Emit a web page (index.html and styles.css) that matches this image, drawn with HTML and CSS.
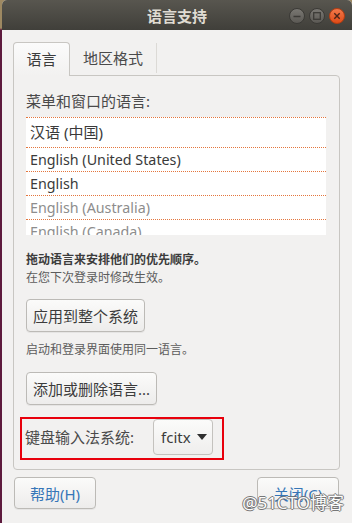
FILE: index.html
```html
<!DOCTYPE html>
<html lang="zh-CN">

<head>
    <meta charset="UTF-8" />
    <meta name="viewport" content="width=device-width, initial-scale=1.0" />
    <title>语言支持</title>
    <link rel="stylesheet" href="styles.css">
</head>

<body>
    <div class="window">
        <div class="titlebar">
            <div class="title">语言支持</div>
            <div class="controls">
                <svg class="ctl" width="16" height="16" viewBox="0 0 16 16">
                    <defs>
                        <linearGradient id="g-grey" x1="0" y1="0" x2="0" y2="1">
                            <stop offset="0" stop-color="#7a7873" />
                            <stop offset="1" stop-color="#5a5853" />
                        </linearGradient>
                        <linearGradient id="g-orange" x1="0" y1="0" x2="0" y2="1">
                            <stop offset="0" stop-color="#f27a4c" />
                            <stop offset="1" stop-color="#df4a16" />
                        </linearGradient>
                    </defs>
                    <circle cx="8" cy="8" r="7.5" fill="url(#g-grey)" stroke="#3a3935" stroke-width="1" />
                    <path d="M4.5 8.5h7" stroke="#3c3b37" stroke-width="1.4" />
                </svg>
                <svg class="ctl" width="16" height="16" viewBox="0 0 16 16">
                    <circle cx="8" cy="8" r="7.5" fill="url(#g-grey)" stroke="#3a3935" stroke-width="1" />
                    <rect x="4.7" y="4.7" width="6.6" height="6.6" fill="none" stroke="#3c3b37" stroke-width="1.3" />
                </svg>
                <svg class="ctl" width="16" height="16" viewBox="0 0 16 16">
                    <circle cx="8" cy="8" r="7.5" fill="url(#g-orange)" stroke="#b23c12" stroke-width="1" />
                    <path d="M5.3 5.3l5.4 5.4M10.7 5.3l-5.4 5.4" stroke="#4a2418" stroke-width="1.4" />
                </svg>
            </div>
        </div>

        <div class="content">
            <div class="tabs">
                <div class="tab active">语言</div>
                <div class="tab">地区格式</div>
            </div>

            <div class="panel">
                <div class="label">菜单和窗口的语言:</div>
                <div class="langs">
                    <div class="lang first">汉语 (中国)</div>
                    <div class="lang">English (United States)</div>
                    <div class="lang">English</div>
                    <div class="lang dim">English (Australia)</div>
                    <div class="lang dim">English (Canada)</div>
                </div>

                <p class="note strong">拖动语言来安排他们的优先顺序。</p>
                <p class="note">在您下次登录时修改生效。</p>

                <button class="btn apply">应用到整个系统</button>

                <p class="note gap">启动和登录界面使用同一语言。</p>

                <button class="btn add">添加或删除语言...</button>

                <div class="kbd">
                    <span class="label">键盘输入法系统:</span>
                    <div class="combo">fcitx <span class="arrow"></span></div>
                </div>
            </div>

            <div class="actions">
                <button class="btn wide">帮助(H)</button>
                <button class="btn wide">关闭(C)</button>
            </div>
        </div>

        <div class="mark">@51CTO博客</div>
    </div>
</body>

</html>
```

FILE: styles.css
```css
* {
    margin: 0;
    padding: 0;
    box-sizing: border-box;
}

body {
    height: 523px;
    overflow: hidden;
    background: linear-gradient(#9e8962 0, #9e8962 28px, #5d1a3d 30px, #5d1a3d 100%);
    font-family: "Noto Sans", "Noto Sans CJK SC", sans-serif;
    color: #3c3c3c;
}

.window {
    position: relative;
    margin-left: 2px;
    height: 523px;
    background-color: #f2f1f0;
    border-radius: 5px 5px 0 0;
    overflow: hidden;
}

.titlebar {
    height: 30px;
    background: linear-gradient(#58564f, #403f3a);
    display: grid;
    grid-template-columns: 1fr auto 1fr;
    align-items: center;
}

.title {
    grid-column: 2;
    color: #dfdbd2;
    font-size: 15px;
    font-weight: bold;
}

.controls {
    justify-self: end;
    display: flex;
    gap: 4px;
    padding-right: 7px;
    padding-top: 1px;
}

.content {
    padding: 12px 12px 0 11px;
}

.tabs {
    display: flex;
    height: 33px;
}

.tab {
    padding: 0 13px;
    font-size: 15px;
    line-height: 31px;
    color: #4a4a4a;
    border-right: 1px solid #dcdad6;
    margin: 1px 0 2px;
    height: 30px;
}

.tab.active {
    width: 57px;
    height: 34px;
    margin: 0 0 -1px;
    padding: 0;
    text-align: center;
    line-height: 33px;
    color: #3c3c3c;
    border: 1px solid #c8c6c2;
    border-bottom: none;
    border-radius: 4px 4px 0 0;
    background: linear-gradient(#fbfbfb, #f2f1f0);
    position: relative;
}

.panel {
    height: 395px;
    border: 1px solid #c8c6c2;
    border-radius: 0 4px 4px 4px;
    padding: 15px 13px 0 12px;
}

.label {
    font-size: 15px;
    line-height: 20px;
    color: #4a4a4a;
}

.langs {
    margin-top: 6px;
    height: 118px;
    background-color: #fff;
    overflow: hidden;
}

.lang {
    height: 24px;
    padding-left: 4px;
    border-top: 1px dotted #e4763e;
    font-size: 14.3px;
    line-height: 23px;
    color: #3a3a3a;
}

.lang.first {
    height: 30px;
    line-height: 29px;
    font-size: 15px;
}

.lang.dim {
    color: #8d8d8d;
}

.note {
    font-size: 12px;
    line-height: 18px;
    color: #5c5c5c;
}

.note.strong {
    margin-top: 16px;
    font-weight: bold;
    color: #3c3c3c;
}

.note.gap {
    margin-top: 9px;
}

.btn {
    display: block;
    height: 33px;
    padding: 0 6px;
    border: 1px solid #bcbab6;
    border-radius: 4px;
    background: linear-gradient(#fbfbfa, #edeceb);
    box-shadow: 0 1px 0 rgba(0, 0, 0, 0.05);
    font-family: inherit;
    font-size: 15px;
    color: #3c3c3c;
}

.btn.apply {
    margin-top: 12px;
}

.btn.add {
    margin-top: 13px;
}

.kbd {
    display: flex;
    align-items: center;
    gap: 19px;
    width: 204px;
    height: 43px;
    margin: 12px 0 0 -6px;
    padding: 0 0 3px 3px;
    border: 2px solid #e8000c;
}

.label.kbd-label {
    letter-spacing: 0.3px;
}

.combo {
    display: flex;
    align-items: center;
    gap: 6px;
    width: 60px;
    height: 36px;
    padding: 0 7px;
    border: 1px solid #c4c2be;
    border-radius: 4px;
    background: linear-gradient(#fbfbfa, #efeeed);
    font-size: 15px;
    color: #3c3c3c;
}

.arrow {
    width: 0;
    height: 0;
    border-left: 5px solid transparent;
    border-right: 5px solid transparent;
    border-top: 6px solid #2f2f2f;
}

.actions {
    display: flex;
    justify-content: space-between;
    margin: 7px 1px 0 1px;
}

.btn.wide {
    width: 82px;
    height: 32px;
    color: #3676b8;
}

.mark {
    position: absolute;
    right: 8px;
    bottom: 9px;
    font-size: 17px;
    color: #ffffff;
    text-shadow: 1px 0 #6a6a6a, -1px 0 #6a6a6a, 0 1px #6a6a6a, 0 -1px #6a6a6a;
    opacity: 0.9;
}
```
